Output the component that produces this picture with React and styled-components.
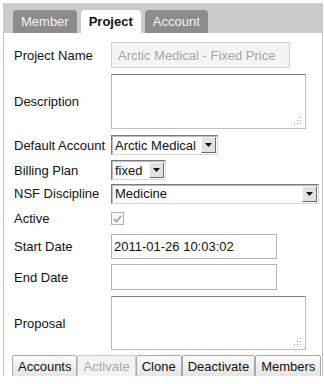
import React from 'react';
import styled, { createGlobalStyle } from 'styled-components';

const Global = createGlobalStyle`
  html, body {
    margin: 0;
    padding: 0;
    background: #fff;
  }
  body {
    font-family: "Liberation Sans", Arial, sans-serif;
    font-size: 13px;
    color: #111;
  }
`;

const Frame = styled.div`
  padding: 3px 0 0 3px;
  width: 320px;
`;

const TabBar = styled.div`
  display: flex;
  gap: 4px;
  align-items: flex-end;
  background: #cbcbcb;
  height: 30px;
  padding-left: 10px;
  box-sizing: border-box;
`;

const Tab = styled.div`
  height: 23px;
  line-height: 23px;
  padding: 0 8px;
  border-radius: 4px 4px 0 0;
  background: ${p => (p.$active ? '#fff' : '#8c8c8c')};
  color: ${p => (p.$active ? '#111' : '#f2f2f2')};
  font-weight: ${p => (p.$active ? 'bold' : 'normal')};
`;

const Panel = styled.div`
  border-left: 1px solid #c4c4c4;
  border-right: 1px solid #c4c4c4;
  padding: 9px 0 8px 10px;
  height: 343px;
  box-sizing: border-box;
`;

const Row = styled.div`
  display: grid;
  grid-template-columns: 97px 1fr;
  align-items: center;
  margin-top: ${p => p.$gap ?? 5}px;
  height: ${p => p.$h}px;
`;

const Label = styled.div`
  white-space: nowrap;
`;

const TextInput = styled.input`
  box-sizing: border-box;
  width: ${p => p.$w}px;
  height: ${p => p.$h || 25}px;
  border: 1px solid ${p => (p.disabled ? '#cfcfcf' : '#b4b4b4')};
  background: ${p => (p.disabled ? '#f4f4f4' : '#fff')};
  color: ${p => (p.disabled ? '#a6a6a6' : '#111')};
  font: inherit;
  padding: 0 ${p => (p.disabled ? 6 : 2)}px;
  margin: 0;
  outline: none;
`;

const AreaWrap = styled.div`
  position: relative;
  width: 195px;
  height: ${p => p.$h}px;
`;

const Area = styled.textarea`
  box-sizing: border-box;
  width: 100%;
  height: 100%;
  border: 1px solid #bdbdbd;
  border-top-color: #7c7c7c;
  resize: none;
  margin: 0;
  padding: 2px;
  font: inherit;
  outline: none;
  display: block;
`;

const Grip = styled.svg`
  position: absolute;
  right: 4px;
  bottom: 4px;
`;

const SelectBox = styled.div`
  box-sizing: border-box;
  width: ${p => p.$w}px;
  height: 20px;
  display: flex;
  align-items: center;
  justify-content: space-between;
  border: 1px solid;
  border-color: #7a7a7a #d8d8d8 #d8d8d8 #7a7a7a;
  box-shadow: inset 1px 1px 0 #bdbdbd;
  background: #fff;
  padding: 0 1px 0 3px;
  white-space: nowrap;
`;

const SelectButton = styled.div`
  box-sizing: border-box;
  width: 15px;
  height: 16px;
  background: #e2e2e2;
  border: 1px solid;
  border-color: #f8f8f8 #6c6c6c #6c6c6c #f8f8f8;
  display: flex;
  align-items: center;
  justify-content: center;
`;

const Check = styled.span`
  box-sizing: border-box;
  width: 13px;
  height: 13px;
  border: 1px solid #b0b0b0;
  background: #f7f7f7;
  display: flex;
  align-items: center;
  justify-content: center;
`;

const ButtonRow = styled.div`
  display: flex;
  margin: 5px 0 0 -2px;
`;

const Button = styled.button`
  box-sizing: border-box;
  height: 23px;
  padding: 0 5px;
  margin: 0;
  font: inherit;
  border: 1px solid ${p => (p.disabled ? '#cacaca' : '#a9a9a9')};
  border-radius: 2px;
  background: ${p =>
    p.disabled ? '#f3f3f3' : 'linear-gradient(#fbfbfb, #e3e3e3)'};
  color: ${p => (p.disabled ? '#a8a8a8' : '#111')};
`;

const Select = ({ width, value }) => (
  <SelectBox $w={width}>
    <span>{value}</span>
    <SelectButton>
      <svg width="7" height="4" viewBox="0 0 7 4">
        <path d="M0 0h7L3.5 4z" fill="#111" />
      </svg>
    </SelectButton>
  </SelectBox>
);

const TextArea = ({ height }) => (
  <AreaWrap $h={height}>
    <Area />
    <Grip width="9" height="9" viewBox="0 0 9 9">
      {[
        [7, 1],
        [7, 4],
        [4, 4],
        [7, 7],
        [4, 7],
        [1, 7],
      ].map(([x, y]) => (
        <rect key={`${x}-${y}`} x={x} y={y} width="1" height="1" fill="#9a9a9a" />
      ))}
    </Grip>
  </AreaWrap>
);

const App = () => {
  return (
    <Frame>
      <Global />
      <TabBar>
        <Tab>Member</Tab>
        <Tab $active>Project</Tab>
        <Tab>Account</Tab>
      </TabBar>
      <Panel>
        <Row $gap={0} $h={26}>
          <Label>Project Name</Label>
          <TextInput disabled $w={179} $h={26} value="Arctic Medical - Fixed Price" readOnly />
        </Row>
        <Row $gap={6} $h={55}>
          <Label>Description</Label>
          <TextArea height={55} />
        </Row>
        <Row $gap={6} $h={20}>
          <Label>Default Account</Label>
          <Select width={107} value="Arctic Medical" />
        </Row>
        <Row $gap={5} $h={20}>
          <Label>Billing Plan</Label>
          <Select width={55} value="fixed" />
        </Row>
        <Row $gap={3} $h={21}>
          <Label>NSF Discipline</Label>
          <Select width={208} value="Medicine" />
        </Row>
        <Row $gap={3} $h={23}>
          <Label>Active</Label>
          <Check>
            <svg width="9" height="8" viewBox="0 0 9 8">
              <path d="M1 4l2.5 2.5L8 1" stroke="#9c9c9c" strokeWidth="1.6" fill="none" />
            </svg>
          </Check>
        </Row>
        <Row $gap={4} $h={25}>
          <Label>Start Date</Label>
          <TextInput $w={166} value="2011-01-26 10:03:02" readOnly />
        </Row>
        <Row $gap={5} $h={26}>
          <Label>End Date</Label>
          <TextInput $w={166} $h={26} />
        </Row>
        <Row $gap={6} $h={54}>
          <Label>Proposal</Label>
          <TextArea height={54} />
        </Row>
        <ButtonRow>
          <Button>Accounts</Button>
          <Button disabled>Activate</Button>
          <Button>Clone</Button>
          <Button>Deactivate</Button>
          <Button>Members</Button>
        </ButtonRow>
      </Panel>
    </Frame>
  );
};

export default App;
